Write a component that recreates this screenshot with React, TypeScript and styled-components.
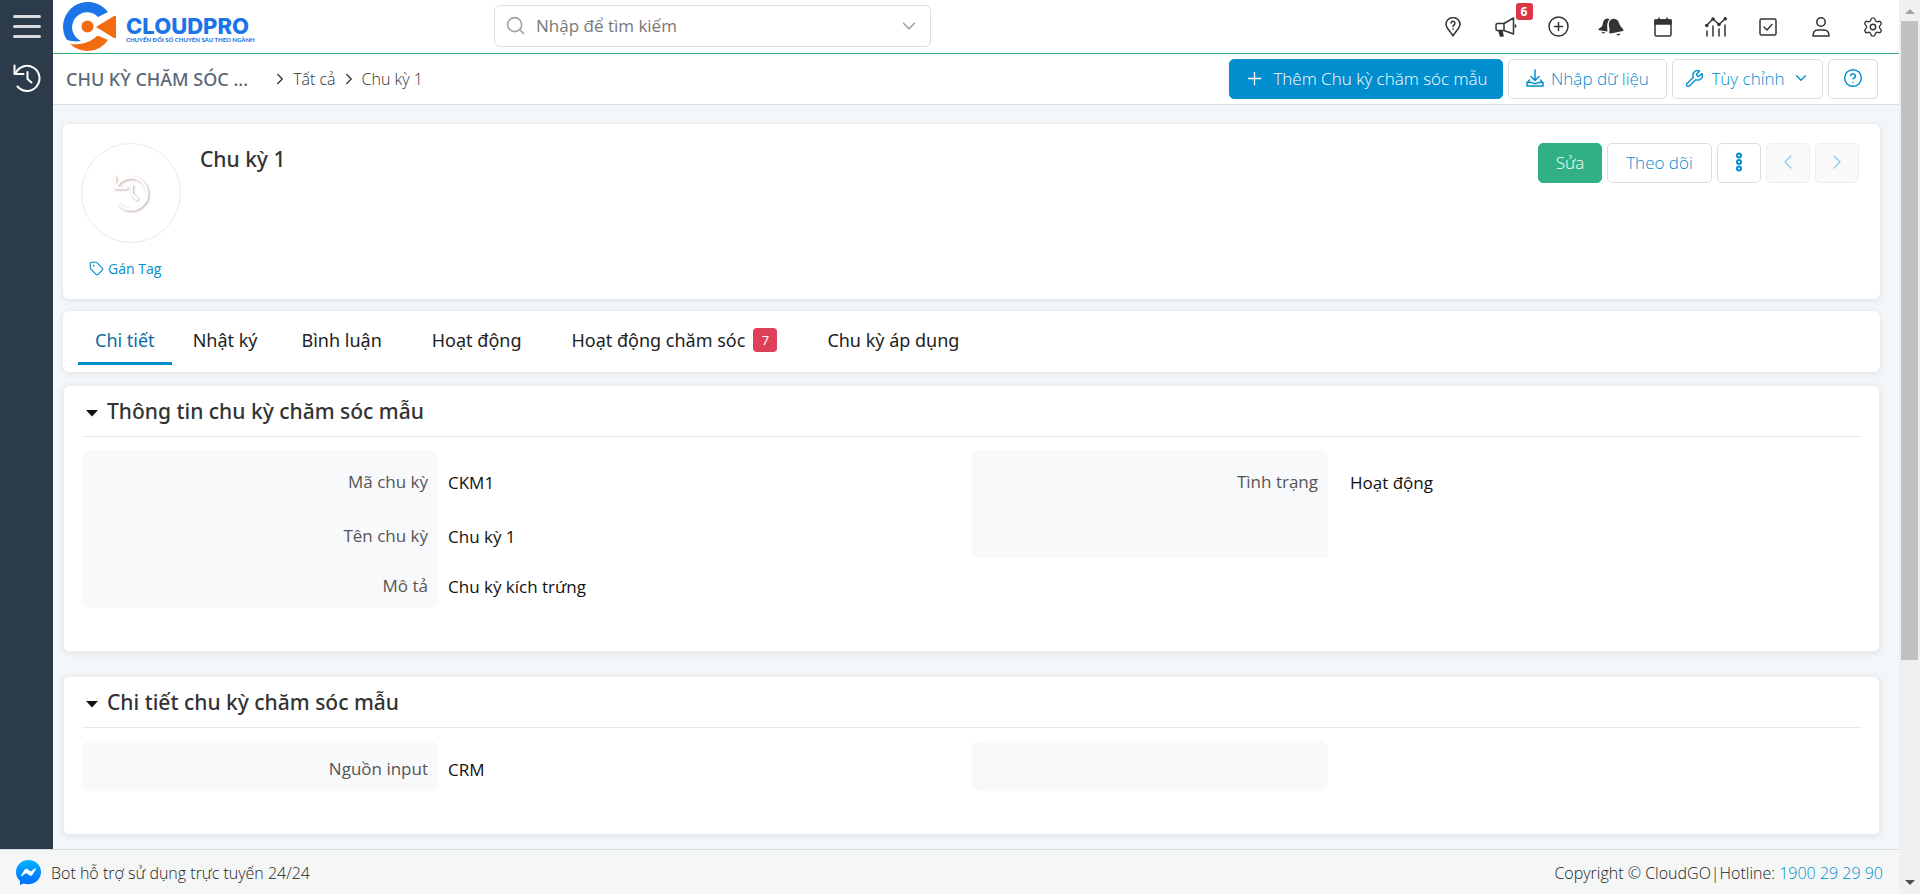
import React from "react";
import styled, { createGlobalStyle, css } from "styled-components";
import { ChevronDown, ChevronLeft, ChevronRight, CircleHelp, Plus, Search, Settings, Tag, Wrench } from "lucide-react";

const GlobalStyle = createGlobalStyle`
  * { box-sizing: border-box; }
  body {
    margin: 0;
    background: #f3f7fa;
    color: #333;
    font-family: "Open Sans", "Noto Sans", sans-serif;
    font-size: 17px;
  }
  button, input { font: inherit; }
  h1, h2, p, dl, dd, dt { margin: 0; }
  a { color: #008ecf; text-decoration: none; }
  svg { flex: none; }
`;

const headingFont = css`
  font-family: "Noto Sans", "Open Sans", sans-serif;
  font-weight: 500;
`;

const Page = styled.div`
  display: grid;
  grid-template-columns: minmax(0, 1fr) 21px;
  height: 100vh;
  overflow: hidden;
`;

const Shell = styled.div`
  display: flex;
  flex-direction: column;
  min-height: 0;
`;

const Body = styled.div`
  display: flex;
  flex: 1;
  min-height: 0;
`;

const Sidebar = styled.nav`
  display: flex;
  flex-direction: column;
  align-items: center;
  gap: 23px;
  width: 53px;
  flex: none;
  padding-top: 12px;
  background: #2c3b49;
`;

const SideButton = styled.button`
  display: flex;
  padding: 0;
  border: 0;
  background: none;
  color: #fff;
  cursor: pointer;
`;

const Content = styled.div`
  flex: 1;
  min-width: 0;
  overflow: hidden;
`;

const TopBar = styled.header`
  display: grid;
  grid-template-columns: 441px 437px 1fr;
  align-items: center;
  height: 54px;
  padding: 0 8px 0 0;
  background: #fff;
  border-bottom: 1px solid #3fb37c;
`;

const Brand = styled.a`
  display: flex;
  align-items: center;
  gap: 10px;
  padding-left: 10px;
`;

const BrandText = styled.span`
  display: flex;
  flex-direction: column;
  padding-top: 6px;
  color: #1b74e8;
`;

const BrandName = styled.span`
  font-family: Inter, sans-serif;
  font-size: 22px;
  font-weight: 800;
  line-height: 20px;
`;

const BrandLine = styled.span`
  font-family: Lato, sans-serif;
  font-size: 6px;
  font-weight: 900;
  line-height: 8px;
  white-space: nowrap;
`;

const SearchBox = styled.label`
  display: flex;
  align-items: center;
  gap: 10px;
  height: 42px;
  padding: 0 10px;
  margin-bottom: 2px;
  border: 1px solid #ddd;
  border-radius: 6px;
  color: #a0a0a0;
`;

const SearchInput = styled.input`
  flex: 1;
  min-width: 0;
  padding: 0;
  border: 0;
  outline: 0;
  background: none;
  &::placeholder { color: #777; opacity: 1; }
`;

const IconRow = styled.div`
  display: flex;
  justify-content: space-between;
  justify-self: end;
  width: 456px;
`;

const IconButton = styled.button`
  position: relative;
  display: flex;
  align-items: center;
  justify-content: center;
  width: 36px;
  height: 36px;
  padding: 0;
  border: 0;
  background: none;
  color: #333;
  cursor: pointer;
`;

const CountBadge = styled.span`
  position: absolute;
  top: -6px;
  right: -9px;
  width: 17px;
  border-radius: 3px;
  background: #dc3545;
  color: #fff;
  font-size: 12px;
  font-weight: 700;
  line-height: 17px;
  text-align: center;
`;

const ModuleBar = styled.div`
  display: flex;
  align-items: center;
  justify-content: space-between;
  height: 51px;
  padding: 0 21px 0 13px;
  background: #fff;
  border-bottom: 1px solid #ddd;
`;

const Crumbs = styled.nav`
  display: flex;
  align-items: center;
  gap: 4px;
  font-size: 16px;
  font-weight: 300;
  a { color: #333; }
`;

const ModuleName = styled.h1`
  ${headingFont}
  margin-right: 19px;
  color: #5b6875;
  font-size: 18px;
`;

const ButtonRow = styled.div`
  display: flex;
  gap: 5px;
`;

const Button = styled.button<{ $kind?: "primary" | "success"; $width?: number }>`
  display: flex;
  align-items: center;
  justify-content: center;
  gap: ${(p) => (p.$kind === "primary" ? 8 : 7)}px;
  width: ${(p) => (p.$width ? `${p.$width}px` : "auto")};
  height: 40px;
  padding: 0 4px 2px;
  border: 1px solid #ddd;
  border-radius: 5px;
  background: #fff;
  color: #008ecf;
  font-weight: 300;
  white-space: nowrap;
  cursor: pointer;
  ${(p) => p.$kind === "primary" && css`background: #008ecf; border-color: #008ecf; color: #fff;`}
  ${(p) => p.$kind === "success" && css`background: #31b083; border-color: #31b083; color: #fff;`}
  &:disabled { background: #fafafa; border-color: #eee; color: #96d0ee; cursor: default; }
`;

const Main = styled.main`
  padding: 19px 19px 0 10px;
`;

const Card = styled.section`
  background: #fff;
  border-radius: 6px;
  box-shadow: 0 1px 6px rgba(0, 0, 0, 0.1);
`;

const Summary = styled(Card)`
  display: flex;
  align-items: flex-start;
  height: 175px;
  padding: 19px 21px 0 18px;
`;

const AvatarColumn = styled.div`
  display: flex;
  flex-direction: column;
  gap: 16px;
  width: 119px;
`;

const Avatar = styled.div`
  display: flex;
  align-items: center;
  justify-content: center;
  width: 100px;
  height: 100px;
  border: 1px solid #eaeaea;
  border-radius: 50%;
  color: #fff;
  svg { filter: drop-shadow(1px 1px 1px rgba(90, 40, 20, 0.4)); }
`;

const TagLink = styled.a`
  display: flex;
  align-items: center;
  gap: 4px;
  padding-left: 8px;
  font-size: 14px;
`;

const RecordName = styled.h2`
  ${headingFont}
  flex: 1;
  font-size: 21px;
  line-height: 32px;
`;

const TabBar = styled(Card)`
  display: flex;
  align-items: flex-start;
  gap: 4px;
  height: 61px;
  margin-top: 12px;
  padding-left: 15px;
`;

const Tab = styled.button<{ $active?: boolean; $compact?: boolean }>`
  display: flex;
  align-items: center;
  gap: 8px;
  height: 54px;
  padding: 6px ${(p) => (p.$compact ? 17 : 23)}px 0;
  border: 0;
  border-bottom: 3px solid ${(p) => (p.$active ? "#008ecf" : "transparent")};
  background: none;
  color: ${(p) => (p.$active ? "#0a6aa1" : "#222")};
  font-family: "Noto Sans", "Open Sans", sans-serif;
  font-size: 18px;
  white-space: nowrap;
  cursor: pointer;
`;

const TabCount = styled.span`
  width: 24px;
  border-radius: 4px;
  background: #df4059;
  color: #fff;
  font-size: 13px;
  line-height: 24px;
`;

const Block = styled(Card)<{ $first?: boolean }>`
  margin-top: ${(p) => (p.$first ? 13 : 24)}px;
  padding: 0 17px 43px 18px;
  border: 1px solid #eee;
`;

const BlockHead = styled.button`
  ${headingFont}
  display: flex;
  align-items: center;
  gap: 9px;
  width: 100%;
  height: 51px;
  padding: 0 0 0 4px;
  border: 0;
  border-bottom: 1px solid #eaeaea;
  background: none;
  color: #333;
  font-size: 21px;
  cursor: pointer;
  svg { margin-top: 5px; }
`;

const Columns = styled.div`
  display: grid;
  grid-template-columns: 1fr 1fr;
  align-items: start;
  padding-top: 13px;
`;

const Fields = styled.dl`
  display: grid;
  grid-template-columns: 40% 60%;
  overflow: hidden;
  border-radius: 8px;
`;

const Label = styled.dt<{ $tall?: boolean; $end?: boolean }>`
  height: ${(p) => (p.$tall ? 54 : 50)}px;
  padding: ${(p) => (p.$tall ? 20 : 16)}px 10px 0 0;
  border-radius: ${(p) => (p.$end ? "0 0 8px 0" : "0")};
  background: #f8f9fb;
  color: #555;
  line-height: 24px;
  text-align: right;
  &:first-of-type { border-top-right-radius: 8px; }
`;

const Value = styled.dd<{ $tall?: boolean; $inset?: boolean }>`
  padding: ${(p) => (p.$tall ? 21 : 17)}px 0 0 ${(p) => (p.$inset ? 22 : 10)}px;
  color: #111;
  line-height: 24px;
`;

const Footer = styled.footer`
  display: flex;
  align-items: center;
  justify-content: space-between;
  height: 45px;
  padding: 1px 16px 0;
  background: #f5f7f7;
  border-top: 1px solid #d8dcdf;
  color: #222;
  font-size: 16px;
  font-weight: 300;
`;

const BotLink = styled.a`
  display: flex;
  align-items: center;
  gap: 10px;
  color: inherit;
`;

const ScrollTrack = styled.div`
  display: flex;
  flex-direction: column;
  align-items: center;
  justify-content: space-between;
  padding: 9px 2px;
  background: #f0f0f0;
`;

const ScrollThumb = styled.div`
  width: 17px;
  height: 73%;
  margin: 7px 0 auto;
  background: #c1c1c1;
`;

const HistoryIcon = ({ size, width }: { size: number; width: number }) => (
  <svg width={size} height={size} viewBox="0 0 28 28" fill="none" stroke="currentColor" strokeWidth={width} strokeLinecap="round" strokeLinejoin="round">
    <path d="M1.5 1.5v8.500h9" />
    <path d="M2.500 9.500A12.500 12.500 0 1 1 4.500 22.500" />
    <path d="M14.500 8v7l4 3.500" />
  </svg>
);

const LogoMark = () => (
  <svg width="53" height="51" viewBox="0 0 53 51">
    <path fill="#1b74e8" d="M45 11A25 25 0 0 0 0 25c0 5 1 10 4 14 4 1 9 2 14 1A15 15 0 1 1 35 16z" />
    <path fill="#f26b0f" d="M7 43c10 1 20-1 27-8l2 0 9 4A25 25 0 0 1 7 43z" />
    <circle cx="24.500" cy="25.500" r="6" fill="#f26b0f" />
    <path fill="#f26b0f" d="M33 26 51 15q2-1 2 1v20q0 2-2 1z" />
  </svg>
);

const line = { fill: "none", stroke: "currentColor", strokeWidth: 1.5, strokeLinecap: "round", strokeLinejoin: "round" } as const;

const PinIcon = () => (
  <svg width="16" height="20" viewBox="0 0 16 20" {...line}>
    <path d="M8 19C6 15 1 11 1 7.500a7 7 0 0 1 14 0C15 11 10 15 8 19z" />
    <path d="M6 6a2 2 0 1 1 3 2q-1 .500-1 1.500M8 12v.200" />
  </svg>
);

const HornIcon = () => (
  <svg width="22" height="20" viewBox="0 0 22 20" {...line}>
    <path d="M2.500 6.500H9L18.500 1v16L9 13.500H2.500Q1 13.500 1 12V8Q1 6.500 2.500 6.500zM9 6.500v7M20.500 8v2" />
    <path d="M4 14l1.500 5H8l-1-5z" fill="currentColor" />
  </svg>
);

const PlusCircleIcon = () => (
  <svg width="21" height="21" viewBox="0 0 21 21" {...line}>
    <circle cx="10.500" cy="10.500" r="9.500" />
    <path d="M6.500 10.500h8M10.500 6.500v8" />
  </svg>
);

const BellsIcon = () => (
  <svg width="26" height="18" viewBox="0 0 26 18" fill="currentColor">
    <path d="M10 .5C6.500 .500 5 3 4.800 6 4.500 8.500 2.500 9.500.500 11q-.500 1 .500 1.300l8.500 1.200C9.500 10 8 5.500 11.500 1.200z" />
    <path d="M3.500 13.700 7.500 14.400Q5 17 3.500 13.700z" />
    <path d="M12.500 2C15.500-.300 19.500.800 20.800 4.500c.900 2.800 2.200 4.500 4.200 6.500q1 1.500 0 2L12.500 15.500q-1.800-.200-1.200-2C12.500 10 8.800 6 12.500 2z" />
    <path d="M18 16.500 22.500 15.500Q21.500 19 18 16.500z" />
  </svg>
);

const CalendarIcon = () => (
  <svg width="18" height="20" viewBox="0 0 18 20" {...line}>
    <rect x="1" y="3" width="16" height="16" rx="1.500" />
    <path d="M1 3h16v4H1z" fill="currentColor" />
    <path d="M5 1v2M13 1v2" />
  </svg>
);

const ChartIcon = () => (
  <svg width="22" height="20" viewBox="0 0 22 20" {...line}>
    <path d="M1.500 8.500 8 2l6 5.500L20.500 1.500M2 14v5M8 9v10M14 12v7M20 8v11" />
    <g fill="currentColor" stroke="none">
      <circle cx="1.800" cy="8.500" r="1.800" /><circle cx="8" cy="2" r="1.800" /><circle cx="14" cy="7.500" r="1.800" /><circle cx="20.200" cy="1.800" r="1.800" />
    </g>
  </svg>
);

const TaskIcon = () => (
  <svg width="18" height="18" viewBox="0 0 18 18" {...line}>
    <rect x="1" y="1" width="16" height="16" rx="1.500" />
    <path d="m5 9 3 3 5-5.500" />
  </svg>
);

const UserIcon = () => (
  <svg width="18" height="20" viewBox="0 0 18 20" {...line}>
    <circle cx="9" cy="5" r="4.200" />
    <path d="M1 19c0-4 2-6 5-6h6c3 0 5 2 5 6z" />
  </svg>
);

const DownloadIcon = () => (
  <svg width="18" height="18" viewBox="0 0 18 18" {...line}>
    <path d="M9 1v10M5 7.500 9 11.500 13 7.500M3.500 11 1 14v3h16v-3l-2.500-3M1 13.500h5l1.500 1h3l1.500-1h5" />
  </svg>
);

const DotsIcon = () => (
  <svg width="8" height="20" viewBox="0 0 8 20" fill="none" stroke="currentColor" strokeWidth="2">
    <circle cx="4" cy="3.500" r="2" /><circle cx="4" cy="10" r="2" /><circle cx="4" cy="16.500" r="2" />
  </svg>
);

const CaretIcon = () => (
  <svg width="12" height="7" viewBox="0 0 12 7"><path d="M0 0h12L6 6.500z" fill="#111" /></svg>
);

const MessengerIcon = () => (
  <svg width="25" height="25" viewBox="0 0 25 25">
    <defs>
      <linearGradient id="messenger" x1="0" y1="0" x2="0" y2="1">
        <stop offset="0" stopColor="#00b2ff" /><stop offset="1" stopColor="#006aff" />
      </linearGradient>
    </defs>
    <path fill="url(#messenger)" d="M12.500 0C5.500 0 0 5.200 0 12c0 3.600 1.500 6.700 4 8.900V25l3.800-1.500c1.500.400 3 .700 4.700.700C19.500 24.200 25 19 25 12.100 25 5.200 19.500 0 12.500 0z" />
    <path fill="#fff" d="m5 15.500 3.700-5.900c.600-.900 1.800-1.100 2.700-.500l2.900 2.200c.300.200.600.200.900 0l4-3c.500-.400 1.200.200.800.800l-3.700 5.900c-.600.900-1.800 1.100-2.700.500l-2.900-2.200c-.300-.200-.600-.200-.900 0l-4 3c-.500.400-1.200-.200-.800-.800z" />
  </svg>
);

const shortcuts = [
  { name: "Hướng dẫn", icon: <PinIcon /> },
  { name: "Thông báo chung", icon: <HornIcon />, count: 6 },
  { name: "Tạo nhanh", icon: <PlusCircleIcon /> },
  { name: "Nhắc nhở", icon: <BellsIcon /> },
  { name: "Lịch", icon: <CalendarIcon /> },
  { name: "Báo cáo", icon: <ChartIcon /> },
  { name: "Công việc", icon: <TaskIcon /> },
  { name: "Tài khoản", icon: <UserIcon /> },
  { name: "Cài đặt", icon: <Settings size={22} strokeWidth={1.5} /> },
];

const tabs = [
  { name: "Chi tiết", compact: true },
  { name: "Nhật ký", compact: true },
  { name: "Bình luận" },
  { name: "Hoạt động" },
  { name: "Hoạt động chăm sóc", count: 7 },
  { name: "Chu kỳ áp dụng" },
];

export default function App() {
  return (
    <Page>
      <GlobalStyle />
      <Shell>
        <Body>
          <Sidebar>
            <SideButton aria-label="Menu">
              <svg width="28" height="29" viewBox="0 0 28 29" stroke="#d8dade" strokeWidth="3" strokeLinecap="round">
                <path d="M1.500 4.500h25M1.500 14.500h25M1.500 24.500h25" />
              </svg>
            </SideButton>
            <SideButton aria-label="Lịch sử"><HistoryIcon size={28} width={2} /></SideButton>
          </Sidebar>
          <Content>
            <TopBar>
              <Brand href="#">
                <LogoMark />
                <BrandText>
                  <BrandName>CLOUDPRO</BrandName>
                  <BrandLine>CHUYỂN ĐỔI SỐ CHUYÊN SÂU THEO NGÀNH</BrandLine>
                </BrandText>
              </Brand>
              <SearchBox>
                <Search size={21} strokeWidth={1.75} />
                <SearchInput type="text" aria-label="Tìm kiếm" placeholder="Nhập để tìm kiếm" />
                <ChevronDown size={22} strokeWidth={1.75} />
              </SearchBox>
              <IconRow>
                {shortcuts.map((s) => (
                  <IconButton key={s.name} aria-label={s.name}>
                    {s.icon}
                    {s.count && <CountBadge>{s.count}</CountBadge>}
                  </IconButton>
                ))}
              </IconRow>
            </TopBar>
            <ModuleBar>
              <Crumbs>
                <ModuleName>CHU KỲ CHĂM SÓC ...</ModuleName>
                <ChevronRight size={18} strokeWidth={1.75} />
                <a href="#">Tất cả</a>
                <ChevronRight size={18} strokeWidth={1.75} />
                <a href="#">Chu kỳ 1</a>
              </Crumbs>
              <ButtonRow>
                <Button $kind="primary" $width={274}><Plus size={21} strokeWidth={1.5} />Thêm Chu kỳ chăm sóc mẫu</Button>
                <Button $width={159}><DownloadIcon />Nhập dữ liệu</Button>
                <Button $width={151}><Wrench size={19} strokeWidth={1.75} />Tùy chỉnh<ChevronDown size={18} strokeWidth={1.75} /></Button>
                <Button $width={50} aria-label="Trợ giúp"><CircleHelp size={20} strokeWidth={1.75} /></Button>
              </ButtonRow>
            </ModuleBar>
            <Main>
              <Summary>
                <AvatarColumn>
                  <Avatar><HistoryIcon size={36} width={2} /></Avatar>
                  <TagLink href="#"><Tag size={15} strokeWidth={1.75} />Gán Tag</TagLink>
                </AvatarColumn>
                <RecordName>Chu kỳ 1</RecordName>
                <ButtonRow>
                  <Button $kind="success" $width={64}>Sửa</Button>
                  <Button $width={105}>Theo dõi</Button>
                  <Button $width={44} aria-label="Thêm thao tác"><DotsIcon /></Button>
                  <Button $width={44} disabled aria-label="Trước"><ChevronLeft size={24} strokeWidth={1.5} /></Button>
                  <Button $width={44} disabled aria-label="Sau"><ChevronRight size={24} strokeWidth={1.5} /></Button>
                </ButtonRow>
              </Summary>
              <TabBar>
                {tabs.map((t, i) => (
                  <Tab key={t.name} $active={i === 0} $compact={t.compact}>
                    {t.name}
                    {t.count && <TabCount>{t.count}</TabCount>}
                  </Tab>
                ))}
              </TabBar>
              <Block $first>
                <BlockHead><CaretIcon />Thông tin chu kỳ chăm sóc mẫu</BlockHead>
                <Columns>
                  <Fields>
                    <Label $tall>Mã chu kỳ</Label><Value $tall>CKM1</Value>
                    <Label $tall>Tên chu kỳ</Label><Value $tall>Chu kỳ 1</Value>
                    <Label $end>Mô tả</Label><Value>Chu kỳ kích trứng</Value>
                  </Fields>
                  <Fields>
                    <Label $tall>Tình trạng</Label><Value $tall $inset>Hoạt động</Value>
                    <Label $tall /><Value $tall />
                  </Fields>
                </Columns>
              </Block>
              <Block>
                <BlockHead><CaretIcon />Chi tiết chu kỳ chăm sóc mẫu</BlockHead>
                <Columns>
                  <Fields>
                    <Label $end>Nguồn input</Label><Value>CRM</Value>
                  </Fields>
                  <Fields>
                    <Label $end /><Value />
                  </Fields>
                </Columns>
              </Block>
            </Main>
          </Content>
        </Body>
        <Footer>
          <BotLink href="#"><MessengerIcon />Bot hỗ trợ sử dụng trực tuyến 24/24</BotLink>
          <p>Copyright © CloudGO|Hotline: <a href="tel:19002929">1900 29 29 90</a></p>
        </Footer>
      </Shell>
      <ScrollTrack>
        <svg width="10" height="5" viewBox="0 0 10 5"><path d="M0 5h10L5 0z" fill="#a3a3a3" /></svg>
        <ScrollThumb />
        <svg width="10" height="5" viewBox="0 0 10 5"><path d="M0 0h10L5 5z" fill="#505050" /></svg>
      </ScrollTrack>
    </Page>
  );
}
